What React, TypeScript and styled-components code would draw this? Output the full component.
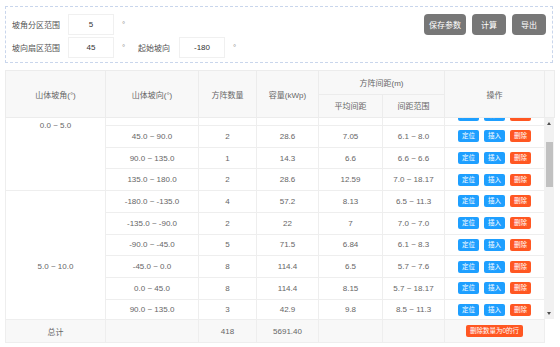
import { ReactElement, useLayoutEffect, useRef } from "react";
import styled, { createGlobalStyle } from "styled-components";

type Row = {
    dir: string;
    count: number;
    cap: string;
    avg: string;
    range: string;
};

type Group = {
    slope: string;
    rows: Row[];
};

const groups: Group[] = [
    {
        slope: "0.0 ~ 5.0",
        rows: [
            { dir: "-90.0 ~ -45.0", count: 3, cap: "42.9", avg: "7.2", range: "6.5 ~ 8.1" },
            { dir: "-45.0 ~ 0.0", count: 6, cap: "85.8", avg: "6.9", range: "5.9 ~ 8.0" },
            { dir: "0.0 ~ 45.0", count: 7, cap: "100.1", avg: "7.4", range: "6.0 ~ 9.2" },
            { dir: "45.0 ~ 90.0", count: 2, cap: "28.6", avg: "7.05", range: "6.1 ~ 8.0" },
            { dir: "90.0 ~ 135.0", count: 1, cap: "14.3", avg: "6.6", range: "6.6 ~ 6.6" },
            { dir: "135.0 ~ 180.0", count: 2, cap: "28.6", avg: "12.59", range: "7.0 ~ 18.17" },
        ],
    },
    {
        slope: "5.0 ~ 10.0",
        rows: [
            { dir: "-180.0 ~ -135.0", count: 4, cap: "57.2", avg: "8.13", range: "6.5 ~ 11.3" },
            { dir: "-135.0 ~ -90.0", count: 2, cap: "22", avg: "7", range: "7.0 ~ 7.0" },
            { dir: "-90.0 ~ -45.0", count: 5, cap: "71.5", avg: "6.84", range: "6.1 ~ 8.3" },
            { dir: "-45.0 ~ 0.0", count: 8, cap: "114.4", avg: "6.5", range: "5.7 ~ 7.6" },
            { dir: "0.0 ~ 45.0", count: 8, cap: "114.4", avg: "8.15", range: "5.7 ~ 18.17" },
            { dir: "90.0 ~ 135.0", count: 3, cap: "42.9", avg: "9.8", range: "8.5 ~ 11.3" },
            { dir: "135.0 ~ 180.0", count: 2, cap: "28.6", avg: "8.4", range: "7.6 ~ 9.2" },
        ],
    },
    {
        slope: "10.0 ~ 15.0",
        rows: [
            { dir: "-180.0 ~ -135.0", count: 6, cap: "85.8", avg: "8.9", range: "7.1 ~ 12.0" },
            { dir: "-135.0 ~ -90.0", count: 4, cap: "57.2", avg: "8.2", range: "7.0 ~ 9.6" },
            { dir: "-90.0 ~ -45.0", count: 9, cap: "128.7", avg: "7.3", range: "6.2 ~ 8.8" },
            { dir: "-45.0 ~ 0.0", count: 12, cap: "171.6", avg: "6.7", range: "5.8 ~ 7.9" },
            { dir: "0.0 ~ 45.0", count: 10, cap: "143", avg: "6.4", range: "5.6 ~ 7.4" },
            { dir: "45.0 ~ 90.0", count: 7, cap: "100.1", avg: "7.6", range: "6.3 ~ 9.1" },
            { dir: "90.0 ~ 135.0", count: 5, cap: "71.5", avg: "9.1", range: "7.8 ~ 10.6" },
            { dir: "135.0 ~ 180.0", count: 3, cap: "42.9", avg: "10.2", range: "8.8 ~ 12.4" },
        ],
    },
    {
        slope: "15.0 ~ 20.0",
        rows: [
            { dir: "-180.0 ~ -135.0", count: 5, cap: "71.5", avg: "9.4", range: "7.9 ~ 12.8" },
            { dir: "-135.0 ~ -90.0", count: 6, cap: "85.8", avg: "8.6", range: "7.2 ~ 10.1" },
            { dir: "-90.0 ~ -45.0", count: 11, cap: "157.3", avg: "7.5", range: "6.4 ~ 9.0" },
            { dir: "-45.0 ~ 0.0", count: 14, cap: "200.2", avg: "6.6", range: "5.7 ~ 7.7" },
            { dir: "0.0 ~ 45.0", count: 13, cap: "185.9", avg: "6.5", range: "5.6 ~ 7.5" },
            { dir: "45.0 ~ 90.0", count: 8, cap: "114.4", avg: "7.8", range: "6.6 ~ 9.3" },
            { dir: "90.0 ~ 135.0", count: 6, cap: "85.8", avg: "9.6", range: "8.1 ~ 11.2" },
            { dir: "135.0 ~ 180.0", count: 4, cap: "57.2", avg: "10.8", range: "9.0 ~ 13.1" },
        ],
    },
    {
        slope: "20.0 ~ 25.0",
        rows: [
            { dir: "-180.0 ~ -135.0", count: 7, cap: "100.1", avg: "9.9", range: "8.2 ~ 13.5" },
            { dir: "-135.0 ~ -90.0", count: 9, cap: "128.7", avg: "8.8", range: "7.4 ~ 10.5" },
            { dir: "-90.0 ~ -45.0", count: 15, cap: "214.5", avg: "7.7", range: "6.5 ~ 9.2" },
            { dir: "-45.0 ~ 0.0", count: 20, cap: "286", avg: "6.8", range: "5.8 ~ 7.9" },
            { dir: "0.0 ~ 45.0", count: 18, cap: "257.4", avg: "6.6", range: "5.7 ~ 7.6" },
            { dir: "45.0 ~ 90.0", count: 12, cap: "171.6", avg: "8.0", range: "6.8 ~ 9.5" },
            { dir: "90.0 ~ 135.0", count: 9, cap: "128.7", avg: "9.9", range: "8.3 ~ 11.6" },
            { dir: "135.0 ~ 180.0", count: 6, cap: "85.8", avg: "11.3", range: "9.4 ~ 13.8" },
        ],
    },
];

const colWidths: number[] = [100, 93, 58, 62, 64, 62, 100];

const ROW_H = 21.7;
const VIEW_H = 201;
const ARROW_H = 11;
const SCROLL_TOP = 58;

export default function App(): ReactElement {

    const bodyRef = useRef<HTMLDivElement>(null);

    useLayoutEffect(() => {
        // the table in the picture is scrolled a little way down
        if (bodyRef.current) {
            bodyRef.current.scrollTop = SCROLL_TOP;
        }
    }, []);

    const rowCount = groups.reduce((n: number, g: Group) => n + g.rows.length, 0);
    const contentH = rowCount * ROW_H;
    const trackH = VIEW_H - ARROW_H * 2;
    const thumbH = Math.round((trackH * VIEW_H) / contentH);
    const thumbTop = Math.round((trackH * SCROLL_TOP) / contentH);

    const cols = colWidths.map((w: number, i: number) => <col key={i} style={{ width: w }} />);

    return (
        <Page>
            <GlobalStyle />

            <ParamPanel>
                <FieldRows>
                    <FieldRow>
                        <FieldLabel $width={56}>坡角分区范围</FieldLabel>
                        <NumberBox defaultValue="5" />
                        <Degree>°</Degree>
                    </FieldRow>
                    <FieldRow>
                        <FieldLabel $width={56}>坡向扇区范围</FieldLabel>
                        <NumberBox defaultValue="45" />
                        <Degree>°</Degree>
                        <FieldLabel $width={41}>起始坡向</FieldLabel>
                        <NumberBox defaultValue="-180" />
                        <Degree>°</Degree>
                    </FieldRow>
                </FieldRows>

                <Actions>
                    <GrayButton>保存参数</GrayButton>
                    <GrayButton>计算</GrayButton>
                    <GrayButton>导出</GrayButton>
                </Actions>
            </ParamPanel>

            <TableWrap>
                <HeadTable>
                    <colgroup>
                        {cols}
                        <col style={{ width: 10 }} />
                    </colgroup>
                    <thead>
                        <tr>
                            <Th rowSpan={2}>山体坡角(°)</Th>
                            <Th rowSpan={2}>山体坡向(°)</Th>
                            <Th rowSpan={2}>方阵数量</Th>
                            <Th rowSpan={2}>容量(kWp)</Th>
                            <Th colSpan={2}>方阵间距(m)</Th>
                            <Th rowSpan={2}>操作</Th>
                            <Th rowSpan={2}></Th>
                        </tr>
                        <tr>
                            <Th>平均间距</Th>
                            <Th>间距范围</Th>
                        </tr>
                    </thead>
                </HeadTable>

                <BodyArea>
                    <BodyScroll ref={bodyRef}>
                        <BodyTable>
                            <colgroup>{cols}</colgroup>
                            <tbody>
                                {groups.map((group: Group) =>
                                    group.rows.map((row: Row, i: number) => (
                                        <tr key={group.slope + row.dir}>
                                            {i === 0 && <Td rowSpan={group.rows.length}>{group.slope}</Td>}
                                            <Td>{row.dir}</Td>
                                            <Td>{row.count}</Td>
                                            <Td>{row.cap}</Td>
                                            <Td>{row.avg}</Td>
                                            <Td>{row.range}</Td>
                                            <Td>
                                                <RowActions>
                                                    <SmallButton $tone="blue">定位</SmallButton>
                                                    <SmallButton $tone="blue">插入</SmallButton>
                                                    <SmallButton $tone="red">删除</SmallButton>
                                                </RowActions>
                                            </Td>
                                        </tr>
                                    ))
                                )}
                            </tbody>
                        </BodyTable>
                    </BodyScroll>

                    <ScrollRail>
                        <RailArrow $dir="up" />
                        <RailTrack>
                            <RailThumb style={{ marginTop: thumbTop, height: thumbH }} />
                        </RailTrack>
                        <RailArrow $dir="down" />
                    </ScrollRail>
                </BodyArea>

                <FootTable>
                    <colgroup>
                        {cols}
                        <col style={{ width: 10 }} />
                    </colgroup>
                    <tbody>
                        <tr>
                            <FootTd>总计</FootTd>
                            <FootTd></FootTd>
                            <FootTd>418</FootTd>
                            <FootTd>5691.40</FootTd>
                            <FootTd></FootTd>
                            <FootTd></FootTd>
                            <FootTd>
                                <SmallButton $tone="red" $wide>删除数量为0的行</SmallButton>
                            </FootTd>
                            <GutterTd></GutterTd>
                        </tr>
                    </tbody>
                </FootTable>
            </TableWrap>
        </Page>
    );
}

const GlobalStyle = createGlobalStyle`
    body {
        margin: 0;
        background: #ffffff;
        font-family: "Liberation Sans", "Noto Sans CJK SC", sans-serif;
    }
`;

const Page = styled.div`
    width: 549px;
    padding: 6px 5px 0 5px;
`;

const ParamPanel = styled.div`
    width: 548px;
    border: 1px dashed #c9d6ec;
    padding: 7px 6px 4px 6px;
    box-sizing: border-box;
    display: flex;
    justify-content: space-between;
    align-items: flex-start;
`;

const FieldRows = styled.div`
    display: flex;
    flex-direction: column;
    gap: 2px;
`;

const FieldRow = styled.div`
    display: flex;
    align-items: center;
    height: 21px;
`;

const FieldLabel = styled.span<{ $width: number }>`
    width: ${(p) => p.$width}px;
    font-size: 8px;
    color: #555;
    white-space: nowrap;
`;

const NumberBox = styled.input`
    width: 46px;
    height: 21px;
    box-sizing: border-box;
    border: 1px solid #f0f0f0;
    background: #fff;
    text-align: center;
    font-family: inherit;
    font-size: 8px;
    color: #333;
    padding: 0;
    outline: none;
`;

const Degree = styled.span`
    width: 24px;
    padding-left: 8px;
    box-sizing: border-box;
    font-size: 8px;
    color: #888;
`;

const Actions = styled.div`
    display: flex;
    gap: 6px;
`;

const GrayButton = styled.button`
    height: 21px;
    min-width: 34px;
    padding: 0 5px;
    border: none;
    border-radius: 4px;
    background: #777777;
    color: #fff;
    font-family: inherit;
    font-size: 8px;
`;

const TableWrap = styled.div`
    margin-top: 7px;
    width: 549px;
`;

const HeadTable = styled.table`
    width: 549px;
    table-layout: fixed;
    border-collapse: collapse;
    background: #f8f8f8;
`;

const Th = styled.th`
    height: 22.5px;
    padding: 0;
    border: 1px solid #ececec;
    font-weight: normal;
    font-size: 8px;
    color: #666;
    text-align: center;
`;

const BodyArea = styled.div`
    display: flex;
    height: ${VIEW_H}px;
`;

const BodyScroll = styled.div`
    width: 539px;
    height: 100%;
    overflow: hidden;
`;

const BodyTable = styled.table`
    width: 539px;
    table-layout: fixed;
    border-collapse: collapse;
    background: #fff;
`;

const Td = styled.td`
    height: ${ROW_H - 1}px;
    padding: 0;
    border: 1px solid #eeeeee;
    font-size: 8px;
    color: #666;
    text-align: center;
    white-space: nowrap;
`;

const ScrollRail = styled.div`
    width: 10px;
    background: #f1f1f1;
    display: flex;
    flex-direction: column;
`;

const RailArrow = styled.div<{ $dir: "up" | "down" }>`
    height: ${ARROW_H}px;
    display: flex;
    align-items: center;
    justify-content: center;

    &::before {
        content: "";
        border-left: 2.5px solid transparent;
        border-right: 2.5px solid transparent;
        ${(p) => (p.$dir === "up" ? "border-bottom: 3px solid #505050;" : "border-top: 3px solid #505050;")}
    }
`;

const RailTrack = styled.div`
    flex: 1;
    display: flex;
    flex-direction: column;
    align-items: center;
`;

const RailThumb = styled.div`
    width: 7px;
    background: #c1c1c1;
`;

const RowActions = styled.div`
    display: flex;
    justify-content: center;
    gap: 5px;
`;

const SmallButton = styled.button<{ $tone: "blue" | "red"; $wide?: boolean }>`
    height: 12px;
    width: ${(p) => (p.$wide ? "auto" : "21px")};
    padding: ${(p) => (p.$wide ? "0 4px" : "0")};
    border: none;
    border-radius: 2px;
    background: ${(p) => (p.$tone === "blue" ? "#1e9fff" : "#ff5722")};
    color: #fff;
    font-family: inherit;
    font-size: 6.5px;
    line-height: 12px;
    white-space: nowrap;
`;

const FootTable = styled.table`
    width: 549px;
    table-layout: fixed;
    border-collapse: collapse;
`;

const FootTd = styled.td`
    height: 22px;
    padding: 0;
    border: 1px solid #eeeeee;
    background: #f8f8f8;
    font-size: 8px;
    color: #666;
    text-align: center;
`;

const GutterTd = styled.td`
    padding: 0;
    background: #fff;
`;
